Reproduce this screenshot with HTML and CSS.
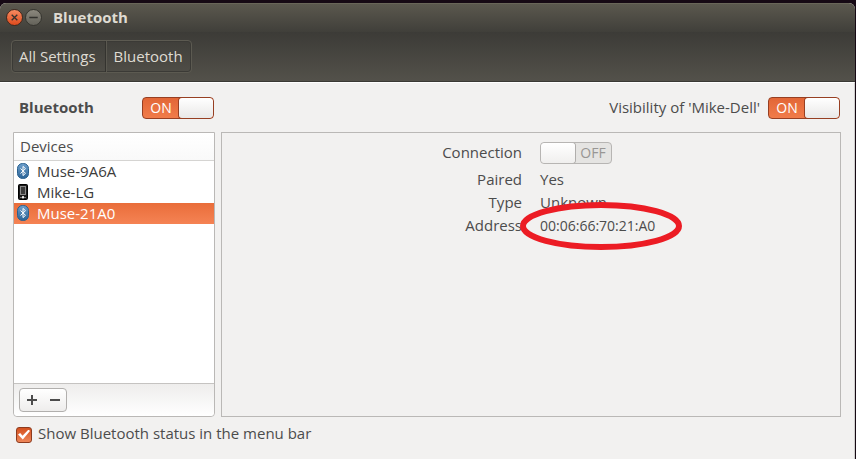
FILE: index.html
```html
<!DOCTYPE html>
<html lang="en">
<head>
<meta charset="utf-8">
<title>Bluetooth</title>
<link rel="stylesheet" href="styles.css">
</head>
<body>
<svg class="defs" aria-hidden="true">
  <defs>
    <linearGradient id="blue" x1="0" y1="0" x2="0" y2="1">
      <stop offset="0" stop-color="#6fa0cc"/><stop offset="1" stop-color="#2a6396"/>
    </linearGradient>
    <symbol id="bt" viewBox="0 0 14 18">
      <rect x="1.5" y="1.5" width="11" height="15" rx="5" fill="url(#blue)" stroke="#29608f"/>
      <path d="M4.500 6.500 9.500 11.300 7 13.600V4.400L9.500 6.700 4.500 11.500" fill="none" stroke="#fff"/>
    </symbol>
    <symbol id="phone" viewBox="0 0 14 18">
      <rect x="2.5" y="1.5" width="9" height="15" rx="1" fill="#191919" stroke="#000"/>
      <rect x="4.5" y="3.5" width="5" height="8" fill="#3a3a3a" stroke="#8a8a8a"/>
      <path d="M4 14.500h1.500M8.500 14.500H10" stroke="#777"/>
      <circle cx="7" cy="14.300" r="1.200" fill="#eee"/>
    </symbol>
  </defs>
</svg>
<div class="window">
  <header class="titlebar">
    <button class="win-btn close" aria-label="Close"><svg viewBox="0 0 16 16"><path d="M5 5l6 6M11 5l-6 6"/></svg></button>
    <button class="win-btn" aria-label="Minimize"><svg viewBox="0 0 16 16"><path d="M3.500 8h9"/></svg></button>
    <h1>Bluetooth</h1>
  </header>
  <nav class="toolbar">
    <div class="crumbs"><button>All Settings</button><button>Bluetooth</button></div>
  </nav>
  <main>
    <div class="top">
      <label class="power" for="power">Bluetooth</label>
      <span class="switch"><input type="checkbox" id="power" checked><span class="state">ON</span><span class="knob"></span></span>
      <label class="visibility" for="visible">Visibility of 'Mike-Dell'</label>
      <span class="switch"><input type="checkbox" id="visible" checked><span class="state">ON</span><span class="knob"></span></span>
    </div>
    <div class="panes">
      <section class="devices">
        <table>
          <thead><tr><th>Devices</th></tr></thead>
          <tbody>
            <tr><td><div class="device"><svg><use href="#bt"/></svg>Muse-9A6A</div></td></tr>
            <tr><td><div class="device"><svg><use href="#phone"/></svg>Mike-LG</div></td></tr>
            <tr class="selected"><td><div class="device"><svg><use href="#bt"/></svg>Muse-21A0</div></td></tr>
          </tbody>
        </table>
        <div class="actions">
          <div class="pair">
            <button aria-label="Add device"><svg viewBox="0 0 10 10"><path d="M0 5h10M5 0v10"/></svg></button>
            <button aria-label="Remove device"><svg viewBox="0 0 10 10"><path d="M0 5h10"/></svg></button>
          </div>
        </div>
      </section>
      <section class="details">
        <dl>
          <dt class="first"><label for="conn">Connection</label></dt>
          <dd class="first"><span class="switch off"><input type="checkbox" id="conn" disabled><span class="knob"></span><span class="state">OFF</span></span></dd>
          <dt>Paired</dt><dd>Yes</dd>
          <dt>Type</dt><dd>Unknown</dd>
          <dt>Address</dt>
          <dd class="address">00:06:66:70:21:A0<svg class="ring" viewBox="0 0 162 48" aria-hidden="true"><ellipse cx="81" cy="24" rx="78" ry="21"/></svg></dd>
        </dl>
      </section>
    </div>
    <label class="status"><input type="checkbox" checked><span>Show Bluetooth status in the menu bar</span></label>
  </main>
</div>
</body>
</html>
```
FILE: styles.css
```css
* { box-sizing: border-box; }
body {
  margin: 0;
  padding: 3px 1px 0 0;
  min-height: 100vh;
  display: flex;
  background: #160914;
  color: #4c4c4c;
  font: 15px/19px "Open Sans", "Noto Sans", sans-serif;
}
button, input { margin: 0; padding: 0; font: inherit; color: inherit; }
svg { display: block; }
.defs { position: absolute; width: 0; height: 0; }

.window {
  flex: 1;
  display: flex;
  flex-direction: column;
  border-radius: 6px 6px 0 0;
  overflow: hidden;
  background: #f2f1f0;
}
.titlebar {
  height: 29px;
  padding: 0 6px 2px;
  display: flex;
  align-items: center;
  gap: 2px;
  background: linear-gradient(#5b584e, #403f3a);
  border-top: 1px solid #696659;
  color: #dfdbd2;
}
.titlebar h1 { margin: 0 0 0 9px; font-size: 15px; font-weight: 700; }
.win-btn {
  width: 17px;
  height: 17px;
  border: 1px solid #36352f;
  border-radius: 50%;
  background: linear-gradient(#8b887d, #64625a);
}
.win-btn.close { background: linear-gradient(#f68a60, #df4b1d); border-color: #41291e; }
.win-btn svg { width: 15px; height: 15px; fill: none; stroke: #33322e; stroke-width: 1.4; }

.toolbar {
  height: 50px;
  padding: 8px 11px;
  background: linear-gradient(#3c3b37, #53514a);
  border-bottom: 1px solid #3a3934;
}
.crumbs {
  display: inline-flex;
  height: 33px;
  border: 1px solid #5c5a51;
  border-radius: 4px;
  box-shadow: 0 0 0 1px #3b3a36 inset;
}
.crumbs button {
  padding: 0 9px 0 7px;
  border: 0;
  background: none;
  color: #dfdbd2;
}
.crumbs button + button { padding: 0 8px; border-left: 1px solid #34332f; box-shadow: 1px 0 #5a5850 inset; }

main {
  flex: 1;
  display: flex;
  flex-direction: column;
  padding: 14px 13px;
  border-top: 1px solid #fff;
  border-right: 1px solid #d0cfce;
}
.top { display: flex; align-items: center; height: 22px; padding-right: 1px; }
.top label, .status span { padding-bottom: 2px; }
.power { width: 129px; padding-left: 6px; font-weight: 700; }
.visibility { margin: 0 8px 0 auto; }

.switch {
  position: relative;
  display: flex;
  width: 72px;
  height: 22px;
  border: 1px solid #973f22;
  border-radius: 4px;
  background: linear-gradient(#e26636, #f17c4a);
  color: #fff;
  font-size: 14px;
  line-height: 20px;
  overflow: hidden;
}
.switch input { position: absolute; inset: 0; width: 100%; height: 100%; opacity: 0; }
.switch .state { flex: 1; text-align: center; }
.switch .knob {
  width: 34px;
  border-radius: 3px;
  background: linear-gradient(#fff, #e9e8e7);
  box-shadow: 0 0 0 1px #973f22;
}
.switch.off { border-color: #b7b5b3; background: #e5e4e2; color: #989694; }
.switch.off .knob { box-shadow: 0 0 0 1px #b0aeac; background: linear-gradient(#fff, #f0efee); }

.panes { flex: 1; display: flex; gap: 6px; margin-top: 13px; }
.devices {
  flex: 0 0 202px;
  display: flex;
  flex-direction: column;
  border: 1px solid #bab8b6;
  border-radius: 0 0 4px 4px;
  background: #fff;
}
table { width: 100%; border-collapse: collapse; }
th {
  height: 27px;
  padding: 0 6px;
  text-align: left;
  font-weight: 400;
  border-bottom: 1px solid #d5d4d2;
  background: linear-gradient(#fff, #f9f9f9);
}
td { padding: 0; color: #3c3c3c; }
.device { display: flex; align-items: center; gap: 7px; height: 21px; padding-left: 2px; }
.device svg { width: 14px; height: 18px; }
.selected td { background: linear-gradient(#e96d3a, #f58354); color: #fff; }
.actions {
  margin-top: auto;
  height: 33px;
  padding: 4px 5px;
  border-top: 1px solid #c5c3c1;
  border-radius: 0 0 4px 4px;
  background: linear-gradient(#eeedec, #fff);
}
.pair {
  display: flex;
  width: 48px;
  height: 24px;
  border: 1px solid #b1afad;
  border-radius: 4px;
  background: linear-gradient(#fff, #eeedec);
}
.pair button { flex: 1; border: 0; background: none; display: grid; place-items: center; }
.pair svg { width: 10px; height: 10px; stroke: #4c4c4c; stroke-width: 2; }

.details { flex: 1; border: 1px solid #bab8b6; }
dl {
  display: grid;
  grid-template-columns: 1fr 1fr;
  gap: 2px 18px;
  margin: 9px 0 0;
  line-height: 21px;
}
dt { text-align: right; }
dd { margin: 0; }
.first { margin-bottom: 3px; height: 22px; }
.address { position: relative; font-size: 14px; }
.ring {
  position: absolute;
  left: -20px;
  top: -13px;
  width: 162px;
  height: 48px;
  fill: none;
  stroke: #ec1c24;
  stroke-width: 6;
  pointer-events: none;
}

.status { display: flex; align-items: center; align-self: flex-start; gap: 6px; margin: 7px 0 0 3px; }
.status input {
  appearance: none;
  width: 16px;
  height: 16px;
  border: 1px solid #8d3b1e;
  border-radius: 3px;
  background: linear-gradient(#d4511f, #ee8659);
  display: grid;
  place-items: center;
}
.status input:checked::before {
  content: "";
  width: 12px;
  height: 10px;
  background: #fff;
  clip-path: polygon(0 50%, 18% 35%, 38% 62%, 88% 0, 100% 14%, 40% 100%);
}
```
